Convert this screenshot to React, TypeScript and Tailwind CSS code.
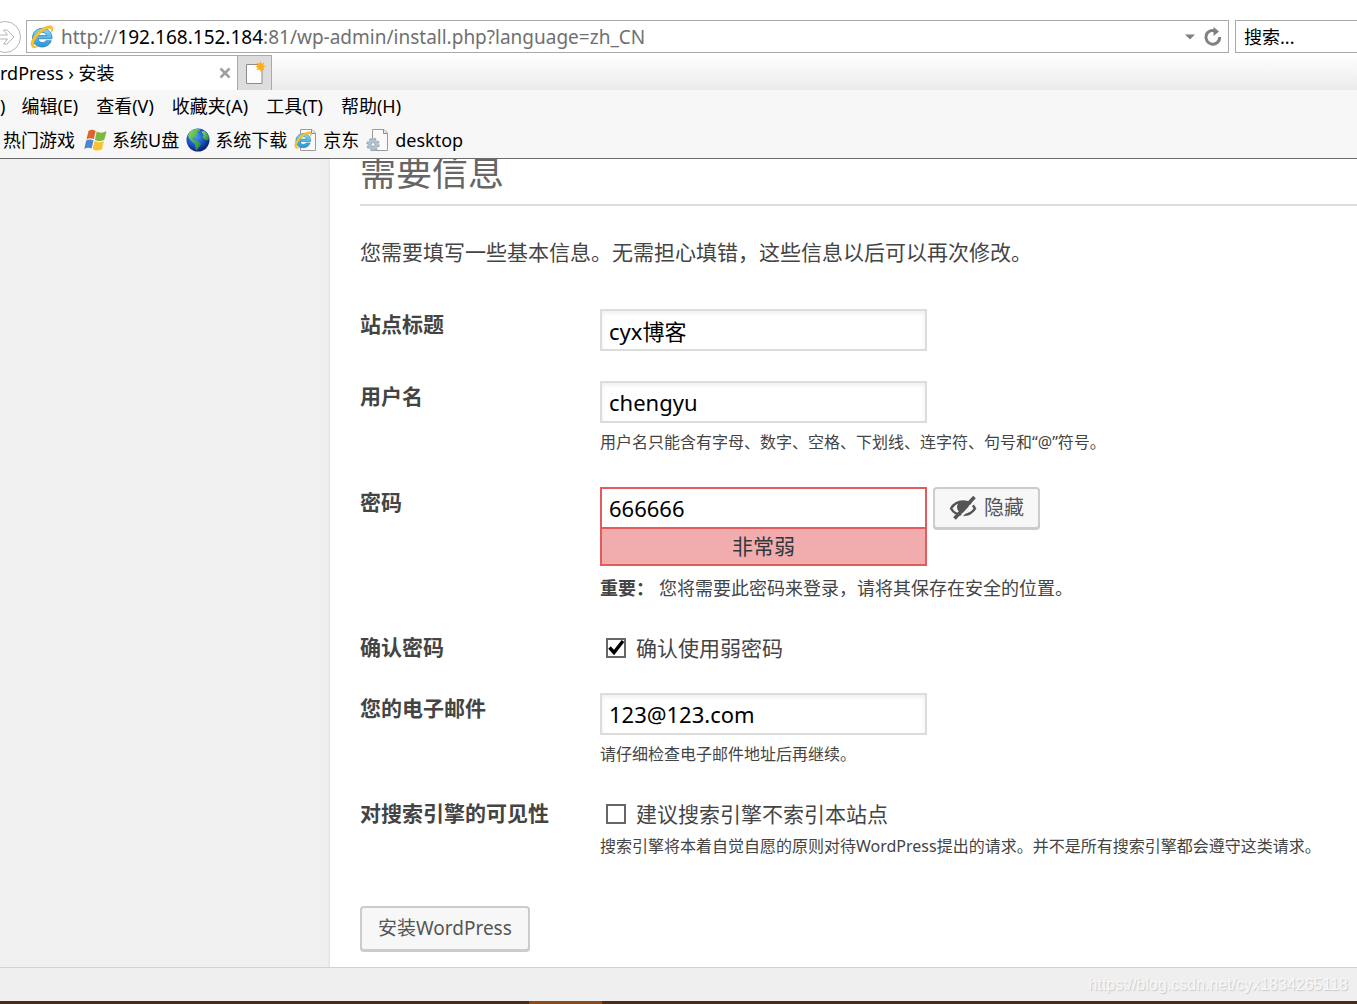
import React, { useState } from 'react';

const menuItems = ['编辑(E)', '查看(V)', '收藏夹(A)', '工具(T)', '帮助(H)'];

const inputClass =
  'h-[42px] w-full border-2 border-[#ddd] bg-white px-[7px] text-[22px] text-black outline-none shadow-[inset_0_2px_4px_rgba(0,0,0,0.07)]';

const IeShape = () => (
  <>
    <path
      d="M22 13.800H8.200c.2 2.400 1.900 3.800 4.100 3.800 1.700 0 2.900-.6 3.600-1.900h5.300c-1.300 3.900-4.800 6.300-8.900 6.300C6.700 22 2.500 18.200 2.500 12.800S6.700 3.300 12.300 3.300c5.900 0 9.900 4.200 9.700 10.500zM16.500 10.600c-.3-2-1.900-3.300-4.100-3.300-2.200 0-3.700 1.200-4.100 3.300z"
      fill="url(#ieBlue)"
      stroke="#1873ae"
      strokeWidth=".7"
    />
    <path
      d="M3.500 22.800C-1 21 1.300 13.500 7 7.800 13 1.800 21-.8 22.500 2c.8 1.500.1 3.500-.9 5.300.4-1.900.4-3-.6-3.500C18.700 2.700 13 5.600 8.800 9.900 4.500 14.400 2.500 19.500 4.500 21.500c.8.6 2 .3 3.200-.3-1.300 1.200-3 2-4.200 1.600z"
      fill="#fbc52c"
      stroke="#e0a012"
      strokeWidth=".5"
    />
  </>
);

const IeLogo = () => (
  <svg viewBox="0 0 24 24" className="size-6 shrink-0" aria-hidden="true">
    <defs>
      <linearGradient id="ieBlue" x1="0" y1="0" x2="0" y2="1">
        <stop offset="0" stopColor="#86d9f8" />
        <stop offset="1" stopColor="#2496d8" />
      </linearGradient>
    </defs>
    <IeShape />
  </svg>
);

const PageIcon: React.FC<{ kind: 'ie' | 'gear' }> = ({ kind }) => (
  <svg viewBox="0 0 24 24" className="size-6 shrink-0" aria-hidden="true">
    <path d="M6.500 1.500h11.500l3.500 3.500v17.500h-15z" fill="#fafafa" stroke="#9a9a9a" />
    <path d="M17.500 1.500v4h4" fill="#e4e4e4" stroke="#8c8c8c" />
    {kind === 'gear' ? (
      <g>
        <circle cx="7" cy="16.500" r="3.800" fill="none" stroke="#b3c1cd" strokeWidth="3.400" />
        <circle cx="7" cy="16.500" r="5.800" fill="none" stroke="#9dafbf" strokeWidth="1.800" strokeDasharray="2.500 2.050" />
        <circle cx="7" cy="16.500" r="2" fill="#f2f4f6" stroke="#8296a8" strokeWidth=".7" />
      </g>
    ) : (
      <g transform="translate(0 3) scale(.76)">
        <IeShape />
      </g>
    )}
  </svg>
);

const WindowsFlag = () => (
  <svg viewBox="0 0 24 24" className="size-6 shrink-0" aria-hidden="true">
    <path d="M5.500 3C8 1.300 10.300 1.600 12.600 2.900L10.800 11.300C8.400 10 6 10 3.500 11.500z" fill="#e2622f" />
    <path d="M13.700 3.600c2.700 1.500 6.300 1.500 9.800-.3l-2.200 8.500c-2.800 1.800-6.700 1.700-9.400.2z" fill="#7cb83e" />
    <path d="M3.200 12.600c2.500-1.500 4.900-1.400 7.300-.2L8.600 20.600C6.300 19.400 3.700 19.500 1.200 21z" fill="#4d86cf" />
    <path d="M11.600 13.100c2.700 1.400 6.300 1.500 9.400-.2l-2 8.400c-3 1.700-6.600 1.500-9.400 0z" fill="#f7c335" />
  </svg>
);

const Globe = () => (
  <svg viewBox="0 0 24 24" className="size-6 shrink-0" aria-hidden="true">
    <defs>
      <radialGradient id="sea" cx=".4" cy=".35" r=".65">
        <stop offset="0" stopColor="#4f9cf2" />
        <stop offset=".6" stopColor="#1c52c6" />
        <stop offset="1" stopColor="#0a1f78" />
      </radialGradient>
      <linearGradient id="land" x1="0" y1="0" x2="1" y2="1">
        <stop offset="0" stopColor="#8be070" />
        <stop offset="1" stopColor="#18882c" />
      </linearGradient>
    </defs>
    <circle cx="12" cy="12" r="11.500" fill="url(#sea)" />
    <path
      d="M3 5C5.500 2 8.500.8 12 .7c2 .5 2.500 1.500 1.500 2.300L11 4l1.500 1.500L10 7.500 8.500 9.500l-2 .5.500 2 3 .5 3 1.500 2 2-1.500 2.500-2 2-.5 2.500-1.500-2.500L9 16l-2.500-2L3.500 11 2 8z"
      fill="url(#land)"
    />
    <path d="M15.500 3.500l3-.5 2.500 2.500 2 4-.5 2.500-2 .5L18 11l-1.500-2 1-2z" fill="url(#land)" />
  </svg>
);

const HiddenIcon = () => (
  <svg viewBox="0 0 28 24" className="h-6 w-7 shrink-0" aria-hidden="true">
    <path
      d="M2 12.500C5 7.500 9 5.500 14 5.500s9.500 2.500 12 7c-3 4.500-7 6.500-12 6.500S4.500 17 2 12.500z"
      fill="none"
      stroke="#555"
      strokeWidth="2.400"
    />
    <circle cx="14" cy="11" r="6" fill="#555" />
    <path d="M27.500 3.500L9.500 23.500" stroke="#f7f7f7" strokeWidth="2.400" />
    <path d="M25.500 1L5.500 22.500" stroke="#555" strokeWidth="3.600" />
  </svg>
);

interface FieldRowProps {
  label: string;
  htmlFor: string;
  className: string;
  children: React.ReactNode;
}

const FieldRow: React.FC<FieldRowProps> = ({ label, htmlFor, className, children }) => (
  <div className={`flex items-start ${className}`}>
    <label htmlFor={htmlFor} className="w-60 shrink-0 text-[21px] leading-[30px] font-bold">
      {label}
    </label>
    <div className="min-w-0 flex-1">{children}</div>
  </div>
);

const CheckOption: React.FC<{ id: string; text: string; initial: boolean }> = ({ id, text, initial }) => {
  const [checked, setChecked] = useState(initial);
  return (
    <label className="flex items-center gap-[10px] pl-[6px] text-[21px] leading-8">
      <span className="grid size-5 shrink-0">
        <input
          id={id}
          type="checkbox"
          checked={checked}
          onChange={(e) => setChecked(e.target.checked)}
          className="col-start-1 row-start-1 size-5 appearance-none border-2 border-[#666] bg-white"
        />
        {checked && (
          <svg viewBox="0 0 20 20" className="pointer-events-none col-start-1 row-start-1 size-5" aria-hidden="true">
            <path d="M3.500 9.500l4.500 5 9-11.500" fill="none" stroke="#000" strokeWidth="3.400" />
          </svg>
        )}
      </span>
      {text}
    </label>
  );
};

const BrowserChrome = () => (
  <header className="shrink-0 text-lg text-black">
    {/* Address bar */}
    <div className="flex items-center pt-5">
      <button aria-label="前进" className="h-8 w-[26px] shrink-0 overflow-hidden">
        <svg viewBox="11 0 26 32" className="h-8 w-[26px]" fill="none" stroke="#b5b5b5" aria-hidden="true">
          <circle cx="16" cy="16" r="15.500" />
          <path d="M8 14h10.500l-4-5H18l7 7-7 7h-3.500l4-5H8" />
        </svg>
      </button>
      <div className="flex h-[33px] min-w-0 flex-1 items-center border border-[#aaa] pr-[5px] pl-[3px]">
        <IeLogo />
        <div role="textbox" aria-label="地址" className="ml-[7px] flex-1 truncate pt-[2px] text-[19px] text-[#707070]">
          http://<span className="text-black">192.168.152.184</span>:81/wp-admin/install.php?language=zh_CN
        </div>
        <button aria-label="显示地址列表" className="p-2">
          <svg viewBox="0 0 10 6" className="h-[6px] w-[10px]" aria-hidden="true">
            <path d="M0 .5h10L5 5.500z" fill="#808080" />
          </svg>
        </button>
        <button aria-label="刷新">
          <svg viewBox="0 0 20 20" className="size-5" aria-hidden="true">
            <path d="M13 4.200A6.900 6.900 0 1 0 16.700 10" fill="none" stroke="#808080" strokeWidth="3" />
            <path d="M10.500 0l5.500 4.500-5.500 4.500z" fill="#808080" />
          </svg>
        </button>
      </div>
      <input
        aria-label="搜索"
        placeholder="搜索..."
        className="ml-[6px] h-[33px] w-[122px] shrink-0 border border-r-0 border-[#aaa] px-2 outline-none placeholder:text-black"
      />
    </div>

    {/* Tabs */}
    <div className="mt-[2px] flex h-[35px] bg-linear-to-b from-white to-[#ebebeb]">
      <div className="flex w-[237px] items-center justify-between border-t border-[#aaa] bg-white pr-[6px]">
        <span>rdPress › 安装</span>
        <button aria-label="关闭选项卡">
          <svg viewBox="0 0 12 12" className="size-3" stroke="#a0a0a0" strokeWidth="2.500" aria-hidden="true">
            <path d="M1.500 1.500l9 9M10.500 1.500l-9 9" />
          </svg>
        </button>
      </div>
      <button
        aria-label="新建选项卡"
        className="flex w-[35px] items-center justify-center border border-b-0 border-[#aaa] bg-[#ddd]"
      >
        <svg viewBox="0 0 22 24" className="h-6 w-[22px]" aria-hidden="true">
          <path d="M2.500 3.500h15.500V22.500H2.500z" fill="#fdfdfd" stroke="#8c8c8c" />
          <path
            d="M16.500 0l1 3 3-1.500-1.500 3 3 1-3 1 1.500 3-3-1.500-1 3-1-3-3 1.500 1.500-3-3-1 3-1-1.500-3 3 1.500z"
            fill="#f9a51a"
          />
          <circle cx="16.500" cy="5.500" r="3" fill="#fbb018" />
        </svg>
      </button>
    </div>

    {/* Menu and favorites */}
    <div className="border-b border-[#6b6b6b] bg-[#f7f7f7]">
      <nav className="flex h-8 items-center gap-[18px]">
        <span className="-mr-[2px]">)</span>
        {menuItems.map((item) => (
          <button key={item}>{item}</button>
        ))}
      </nav>
      <nav className="flex h-9 items-center gap-[7px] pl-[3px]">
        <a href="#games" className="mr-[1px]">热门游戏</a>
        <a href="#udisk" className="flex items-center gap-[5px]">
          <WindowsFlag />
          系统U盘
        </a>
        <a href="#download" className="flex items-center gap-[5px]">
          <Globe />
          系统下载
        </a>
        <a href="#jd" className="flex items-center gap-[5px]">
          <PageIcon kind="ie" />
          京东
        </a>
        <a href="#desktop" className="flex items-center gap-[5px]">
          <PageIcon kind="gear" />
          desktop
        </a>
      </nav>
    </div>
  </header>
);

export default function App() {
  const [title, setTitle] = useState('cyx博客');
  const [user, setUser] = useState('chengyu');
  const [password, setPassword] = useState('666666');
  const [email, setEmail] = useState('123@123.com');

  return (
    <div className="flex min-h-screen flex-col overflow-hidden bg-white font-['Noto_Sans','Noto_Sans_CJK_SC',sans-serif]">
      <BrowserChrome />

      <main className="flex flex-1 overflow-hidden bg-[#f0f0f0]">
        <div className="ml-[330px] min-w-0 flex-1 bg-white pl-[30px] text-[#444] shadow-[0_1px_3px_rgba(0,0,0,0.13)]">
          <h1 className="-mt-1 border-b-2 border-[#ddd] pb-[13px] text-4xl leading-9 text-[#666]">需要信息</h1>
          <p className="mt-[30px] text-[21px] leading-8">您需要填写一些基本信息。无需担心填错，这些信息以后可以再次修改。</p>

          <form className="whitespace-nowrap" onSubmit={(e) => e.preventDefault()}>
            <FieldRow label="站点标题" htmlFor="title" className="mt-[41px]">
              <div className="w-[327px]">
                <input id="title" value={title} onChange={(e) => setTitle(e.target.value)} className={inputClass} />
              </div>
            </FieldRow>

            <FieldRow label="用户名" htmlFor="user" className="mt-[30px]">
              <div className="w-[327px]">
                <input id="user" value={user} onChange={(e) => setUser(e.target.value)} className={inputClass} />
              </div>
              <p className="mt-[3px] text-base leading-8">用户名只能含有字母、数字、空格、下划线、连字符、句号和“@”符号。</p>
            </FieldRow>

            <FieldRow label="密码" htmlFor="password" className="mt-[29px]">
              <div className="flex items-start gap-[6px]">
                <div className="w-[327px] border-2 border-[#e35b5b] text-center">
                  <input
                    id="password"
                    value={password}
                    onChange={(e) => setPassword(e.target.value)}
                    className="block h-10 w-full border-b-2 border-[#e35b5b] px-[7px] text-[22px] text-black outline-none"
                  />
                  <div className="bg-[#f1adad] text-[21px] leading-[35px] text-[#32373c]">非常弱</div>
                </div>
                <button
                  type="button"
                  className="flex h-[42px] items-center gap-[7px] rounded-[4px] border-2 border-[#ccc] bg-[#f7f7f7] px-[14px] text-xl text-[#555] shadow-[0_1px_0_#ccc]"
                >
                  <HiddenIcon />
                  隐藏
                </button>
              </div>
              <p className="mt-[6px] text-lg leading-8">
                <strong className="mr-[5px]">重要：</strong>您将需要此密码来登录，请将其保存在安全的位置。
              </p>
            </FieldRow>

            <FieldRow label="确认密码" htmlFor="weak" className="mt-7">
              <CheckOption id="weak" text="确认使用弱密码" initial />
            </FieldRow>

            <FieldRow label="您的电子邮件" htmlFor="email" className="mt-[29px]">
              <div className="w-[327px]">
                <input id="email" value={email} onChange={(e) => setEmail(e.target.value)} className={inputClass} />
              </div>
              <p className="mt-[3px] text-base leading-8">请仔细检查电子邮件地址后再继续。</p>
            </FieldRow>

            <FieldRow label="对搜索引擎的可见性" htmlFor="robots" className="mt-7">
              <CheckOption id="robots" text="建议搜索引擎不索引本站点" initial={false} />
              <p className="text-base leading-8">
                搜索引擎将本着自觉自愿的原则对待WordPress提出的请求。并不是所有搜索引擎都会遵守这类请求。
              </p>
            </FieldRow>

            <button
              type="submit"
              className="mt-11 mb-[15px] h-[45px] rounded-[4px] border-2 border-[#ccc] bg-[#f7f7f7] px-4 text-[19px] text-[#555] shadow-[0_1px_0_#ccc]"
            >
              安装WordPress
            </button>
          </form>
        </div>
      </main>

      <footer className="shrink-0">
        <div className="flex h-[34px] items-center justify-end border-t border-[#d2d2d2] bg-[#efefef] pr-[9px] font-['Liberation_Sans',sans-serif] text-base text-[#f8f8f8] [text-shadow:1px_1px_1px_#c8c8c8]">
          https://blog.csdn.net/cyx1834265118
        </div>
        <div className="flex h-[3px] bg-[#4d2b12]">
          <div className="ml-[39%] w-[73px] bg-[#8c4a1c]" />
        </div>
      </footer>
    </div>
  );
}
